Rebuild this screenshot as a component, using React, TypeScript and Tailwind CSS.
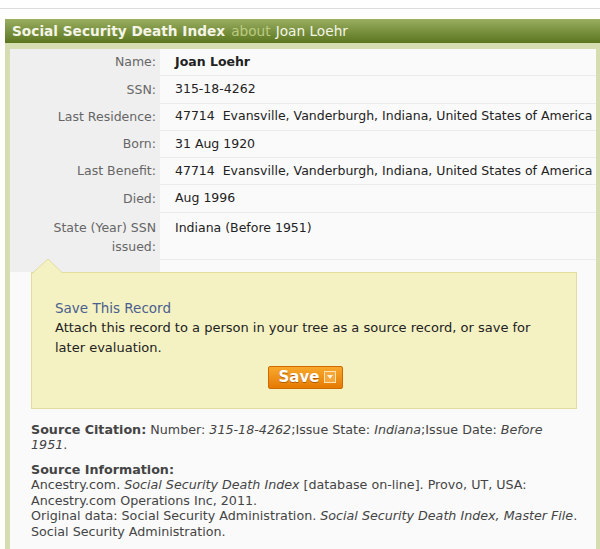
import { type ReactNode } from "react";

type Row = { label: ReactNode; value: ReactNode; tall?: boolean };

const rows: Row[] = [
  { label: "Name:", value: <span className="font-bold">Joan Loehr</span> },
  { label: "SSN:", value: "315-18-4262" },
  { label: "Last Residence:", value: "47714  Evansville, Vanderburgh, Indiana, United States of America" },
  { label: "Born:", value: "31 Aug 1920" },
  { label: "Last Benefit:", value: "47714  Evansville, Vanderburgh, Indiana, United States of America" },
  { label: "Died:", value: "Aug 1996" },
  {
    label: (
      <>
        State (Year) SSN
        <br />
        issued:
      </>
    ),
    value: "Indiana (Before 1951)",
    tall: true,
  },
];

const SaveButton = () => (
  <button className="flex h-[23px] items-center gap-[5px] rounded-[2px] border border-[#d06a00] bg-gradient-to-b from-[#f8a82a] to-[#e57a00] pl-[10px] pr-[6px] text-[15px] font-bold text-white [text-shadow:0_1px_0_#b05a00]">
    Save
    {/* dropdown square */}
    <span className="flex h-[12px] w-[12px] items-center justify-center border border-[#fde3b8] bg-[#f7a63a]">
      <svg width="8" height="6" viewBox="0 0 8 6">
        <path d="M1 1h6L4 5z" fill="#fff3de" />
      </svg>
    </span>
  </button>
);

export default function App() {
  return (
    <div className="h-[549px] w-[600px] overflow-hidden bg-white font-['DejaVu_Sans',Verdana,sans-serif] text-[12.5px]">
      <div className="h-[8px]" />
      <div className="h-[11px] border-t border-[#dcdcdc]" />

      <div className="ml-[5px]">
        {/* Title bar */}
        <div className="flex h-[24px] items-center bg-gradient-to-b from-[#9aae60] to-[#5b761e] pl-[7px] text-[13.7px] text-[#f4f5e6]">
          <span className="font-bold">Social Security Death Index</span>
          <span className="ml-[6px] text-[#bccb80]">about</span>
          <span className="ml-[5px]">Joan Loehr</span>
        </div>

        {/* Panel */}
        <div className="bg-[#d6ddb0] pl-[5px] pr-[4px] pt-[6px]">
          <div className="bg-[#fafafa] pb-[40px]">
            {rows.map((r, i) => (
              <div key={i} className="flex">
                <div
                  className={
                    r.tall
                      ? "w-[150px] shrink-0 bg-[#efefef] pr-[4px] pt-[5px] pb-[4px] text-right leading-[19px] text-[#666]"
                      : "flex h-[27.3px] w-[150px] shrink-0 items-center justify-end bg-[#efefef] pr-[4px] text-[#666]"
                  }
                >
                  {r.label}
                </div>
                <div
                  className={
                    r.tall
                      ? "flex-1 border-b border-[#ebebeb] pl-[15px] pt-[5px] leading-[19px] whitespace-pre text-[#222]"
                      : "flex h-[27.3px] flex-1 items-center border-b border-[#ebebeb] pl-[15px] whitespace-pre text-[#222]"
                  }
                >
                  {r.value}
                </div>
              </div>
            ))}
            <div className="flex h-[12px]">
              <div className="w-[150px] bg-[#efefef]" />
            </div>

            {/* Save box */}
            <div className="relative ml-[21px] mr-[19px] border border-[#e2dd9c] bg-[#f4f1c3] pb-[19px] pl-[23px] pr-[20px] pt-[25px] text-[13px] leading-[20px] text-[#222]">
              <svg className="absolute left-[0px] top-[-15px]" width="32" height="16" viewBox="0 0 32 16">
                <path d="M0 15.5 L16 1 L31 15.5" fill="#f4f1c3" stroke="#e2dd9c" />
                <rect x="1" y="15" width="30" height="2" fill="#f4f1c3" />
              </svg>
              <div className="text-[13.5px] text-[#4b5f8e]">Save This Record</div>
              <div>Attach this record to a person in your tree as a source record, or save for later evaluation.</div>
              <div className="mt-[8px] flex justify-center">
                <SaveButton />
              </div>
            </div>

            {/* Source */}
            <div className="pl-[21px] pr-[18px] pt-[13px] text-[12.7px] leading-[15px] text-[#444]">
              <p className="pr-[16px]">
                <span className="font-bold">Source Citation:</span> Number: <i>315-18-4262</i>;Issue State: <i>Indiana</i>;Issue Date: <i>Before 1951</i>.
              </p>
              <p className="mt-[10px] leading-[15.5px] font-bold">Source Information:</p>
              <p className="leading-[15.5px]">
                Ancestry.com. <i>Social Security Death Index</i> [database on-line]. Provo, UT, USA: Ancestry.com Operations Inc, 2011.
                <br />
                Original data: Social Security Administration. <i>Social Security Death Index, Master File</i>. Social Security Administration.
              </p>
            </div>
          </div>
        </div>
      </div>
    </div>
  );
}
